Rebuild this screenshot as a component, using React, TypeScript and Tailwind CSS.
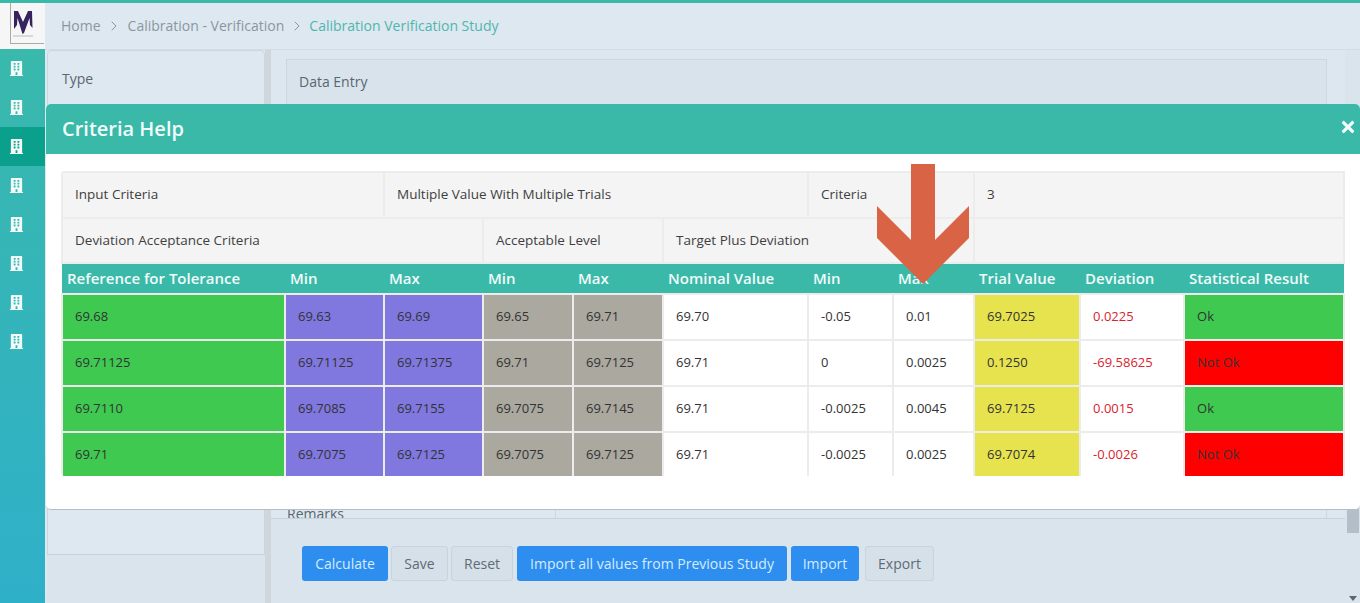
import { FaBuilding, FaTimes } from 'react-icons/fa';
import { ChevronRight } from 'lucide-react';

const navItems = [0, 1, 2, 3, 4, 5, 6, 7];

type Row = {
  ref: string;
  min: string;
  max: string;
  lowMin: string;
  lowMax: string;
  nominal: string;
  devMin: string;
  devMax: string;
  trial: string;
  deviation: string;
  result: string;
};

const rows: Row[] = [
  { ref: '69.68', min: '69.63', max: '69.69', lowMin: '69.65', lowMax: '69.71', nominal: '69.70', devMin: '-0.05', devMax: '0.01', trial: '69.7025', deviation: '0.0225', result: 'Ok' },
  { ref: '69.71125', min: '69.71125', max: '69.71375', lowMin: '69.71', lowMax: '69.7125', nominal: '69.71', devMin: '0', devMax: '0.0025', trial: '0.1250', deviation: '-69.58625', result: 'Not Ok' },
  { ref: '69.7110', min: '69.7085', max: '69.7155', lowMin: '69.7075', lowMax: '69.7145', nominal: '69.71', devMin: '-0.0025', devMax: '0.0045', trial: '69.7125', deviation: '0.0015', result: 'Ok' },
  { ref: '69.71', min: '69.7075', max: '69.7125', lowMin: '69.7075', lowMax: '69.7125', nominal: '69.71', devMin: '-0.0025', devMax: '0.0025', trial: '69.7074', deviation: '-0.0026', result: 'Not Ok' },
];

const headers = ['Reference for Tolerance', 'Min', 'Max', 'Min', 'Max', 'Nominal Value', 'Min', 'Max', 'Trial Value', 'Deviation', 'Statistical Result'];
const colWidths = ['w-[223px]', 'w-[99px]', 'w-[99px]', 'w-[90px]', 'w-[90px]', 'w-[145px]', 'w-[85px]', 'w-[81px]', 'w-[106px]', 'w-[104px]', 'w-[160px]'];

const infoCell = 'border-2 border-[#ececec] bg-[#f4f4f4] pl-3 text-[13.5px] font-medium text-[#3f3f3f]';
const dataCell = 'h-[46px] border-2 border-[#ececec] pl-3 text-[13px] text-[#333]';
const blueBtn = 'h-[35px] rounded-[3px] bg-[#2d8ef0] text-sm text-[#d6ebff]';
const grayBtn = 'h-[35px] rounded-[3px] border border-[#c8d3dc] bg-[#d6e0e8] text-sm text-[#5f6b76]';

function Logo() {
  return (
    <div className="flex h-[46px] w-[45px] shrink-0 bg-[#f6f6f6] pl-[10px]">
      <div className="flex h-[41px] w-[34px] flex-col border-b border-l border-[#a9a9a9] pl-[2px] pt-[8px]">
        <svg width="20" height="23" viewBox="0 0 20 23">
          <path d="M1 0h4l5 11 5-11h4l.500 17-2.500-3-.5-7L11 22l-1.500 1L4.500 7 4 14l-3 4z" fill="#35225e" />
        </svg>
        <div className="mt-[1px] h-[2px] w-[20px] bg-[#d8d8d8]" />
      </div>
    </div>
  );
}

function Sidebar() {
  return (
    <div className="flex w-[45px] shrink-0 flex-col bg-gradient-to-b from-[#3ab9a9] to-[#2fb0c9]">
      <Logo />
      <div>
        {navItems.map((i) => (
          <div key={i} className={`flex h-[39px] items-center justify-center pr-[13px] ${i === 2 ? 'bg-[#0ba08b]' : ''}`}>
            <FaBuilding size={15} color="#f2fbfa" />
          </div>
        ))}
      </div>
    </div>
  );
}

function Breadcrumb() {
  return (
    <div className="flex h-[46px] shrink-0 items-center pb-[1px] pl-4 text-sm text-[#8b969f]">
      <span>Home</span>
      <ChevronRight size={16} strokeWidth={1.5} className="mx-[5.500px]" />
      <span>Calibration - Verification</span>
      <ChevronRight size={16} strokeWidth={1.5} className="mx-[4.500px]" />
      <span className="text-[#4fb6ae]">Calibration Verification Study</span>
    </div>
  );
}

function MainPage() {
  return (
    <div className="flex min-h-0 flex-1 border-t border-[#d3dde5]">
      <div className="flex w-[220px] shrink-0 flex-col pl-[2px]">
        <div className="flex-1 rounded-t-[5px] border border-b-0 border-[#cdd6de] pl-[14px] pt-[18px] text-sm text-[#5a6670]">Type</div>
        <div className="h-[49px] border-t border-[#c8d2da] bg-[#dae4ec]" />
      </div>
      <div className="w-[6px] shrink-0 bg-[#cfd6dc]" />
      <div className="flex min-w-0 flex-1 flex-col bg-[#dde7ef]">
        <div className="flex h-[469px] flex-col justify-between overflow-hidden border-b border-[#c8d2da] pl-[15px] pr-[18px] pt-[9px]">
          <div className="h-[60px] border border-[#cdd6de] bg-[#d9e3eb] pl-3 pt-[12px] text-sm text-[#5a6670]">Data Entry</div>
          <div className="flex h-[9px] border-r border-t border-[#cdd6de]">
            <div className="-mt-[1px] w-[270px] border-r border-[#cdd6de] pl-[1px] text-sm leading-[10px] text-[#5a6670]">Remarks</div>
          </div>
        </div>
        <div className="flex flex-1 items-start gap-[3px] bg-[#dae4ec] pl-[31px] pt-[27px]">
          <button className={`${blueBtn} w-[86px]`}>Calculate</button>
          <button className={`${grayBtn} w-[57px]`}>Save</button>
          <button className={`${grayBtn} w-[62px]`}>Reset</button>
          <button className={`${blueBtn} ml-[1px] w-[270px]`}>Import all values from Previous Study</button>
          <button className={`${blueBtn} ml-[1px] w-[68px]`}>Import</button>
          <button className={`${grayBtn} ml-[3px] w-[69px]`}>Export</button>
        </div>
      </div>
      <div className="relative w-[15px] shrink-0 bg-[#dae4ec]">
        <div className="mx-auto mt-[260px] h-[223px] w-[12px] bg-[#b3bec8]" />
        <div className="absolute bottom-[2px] left-[4px] h-0 w-0 border-x-[4px] border-t-[5px] border-x-transparent border-t-[#5d6670]" />
      </div>
    </div>
  );
}

function CriteriaTable() {
  return (
    <div className="h-[305px] overflow-hidden rounded-[4px]">
      <table className="w-[1282px] table-fixed border-collapse">
        <colgroup>
          {colWidths.map((w, i) => (
            <col key={i} className={w} />
          ))}
        </colgroup>
        <tbody>
          <tr className="h-[46px]">
            <td colSpan={2} className={`${infoCell} pb-[2px]`}>Input Criteria</td>
            <td colSpan={4} className={`${infoCell} pb-[2px]`}>Multiple Value With Multiple Trials</td>
            <td colSpan={2} className={`${infoCell} pb-[2px]`}>Criteria</td>
            <td colSpan={3} className={`${infoCell} pb-[2px]`}>3</td>
          </tr>
          <tr className="h-[45px]">
            <td colSpan={3} className={infoCell}>Deviation Acceptance Criteria</td>
            <td colSpan={2} className={infoCell}>Acceptable Level</td>
            <td colSpan={3} className={infoCell}>Target Plus Deviation</td>
            <td colSpan={3} className={infoCell} />
          </tr>
          <tr className="bg-[#3ab9a9]">
            {headers.map((h, i) => (
              <td key={i} className="h-[31px] pl-[5px] text-[15px] font-semibold whitespace-nowrap text-[#f1fbfa]">{h}</td>
            ))}
          </tr>
          {rows.map((r, i) => (
            <tr key={i}>
              <td className={`${dataCell} bg-[#3fc951] text-[#1c1c1c]`}>{r.ref}</td>
              <td className={`${dataCell} bg-[#8077df] text-[#1c1c1c]`}>{r.min}</td>
              <td className={`${dataCell} bg-[#8077df] text-[#1c1c1c]`}>{r.max}</td>
              <td className={`${dataCell} bg-[#aaa89f] text-[#1c1c1c]`}>{r.lowMin}</td>
              <td className={`${dataCell} bg-[#aaa89f] text-[#1c1c1c]`}>{r.lowMax}</td>
              <td className={`${dataCell} bg-white`}>{r.nominal}</td>
              <td className={`${dataCell} bg-white`}>{r.devMin}</td>
              <td className={`${dataCell} bg-white`}>{r.devMax}</td>
              <td className={`${dataCell} bg-[#e6e34f] text-[#1c1c1c]`}>{r.trial}</td>
              <td className={`${dataCell} bg-white text-[#d9232e]`}>{r.deviation}</td>
              <td className={`${dataCell} ${r.result === 'Ok' ? 'bg-[#3fc951]' : 'bg-[#ff0000]'} text-[#1c1c1c]`}>{r.result}</td>
            </tr>
          ))}
        </tbody>
      </table>
    </div>
  );
}

function CriteriaModal() {
  return (
    <div className="absolute left-[46px] top-[104px] h-[406px] w-[1314px] overflow-hidden rounded-[5px] border-b border-[#b5bec5] bg-white">
      <div className="flex h-[50px] items-center justify-between bg-[#3ab9a9] pl-4 pr-[3px]">
        <span className="text-xl font-semibold text-[#f1fbfa]">Criteria Help</span>
        <FaTimes size={18} color="#f1fbfa" className="mb-[4px]" />
      </div>
      <div className="pl-[15px] pt-[17px]">
        <CriteriaTable />
      </div>
    </div>
  );
}

// red arrow pasted on top of the screenshot
function Arrow() {
  return (
    <svg className="absolute left-[870px] top-[160px]" width="106" height="128" viewBox="0 0 106 128">
      <path d="M41 4h24v76l34-34v32l-46 46-46-46V46l34 34z" fill="#d86445" />
    </svg>
  );
}

export default function App() {
  return (
    <div className="relative flex h-[603px] w-[1360px] flex-col overflow-hidden bg-[#dee8f0] font-['Open_Sans',sans-serif]">
      <div className="h-[3px] shrink-0 bg-[#3ab9a9]" />
      <div className="flex min-h-0 flex-1">
        <Sidebar />
        <div className="flex min-w-0 flex-1 flex-col">
          <Breadcrumb />
          <MainPage />
        </div>
      </div>
      <CriteriaModal />
      <Arrow />
    </div>
  );
}
